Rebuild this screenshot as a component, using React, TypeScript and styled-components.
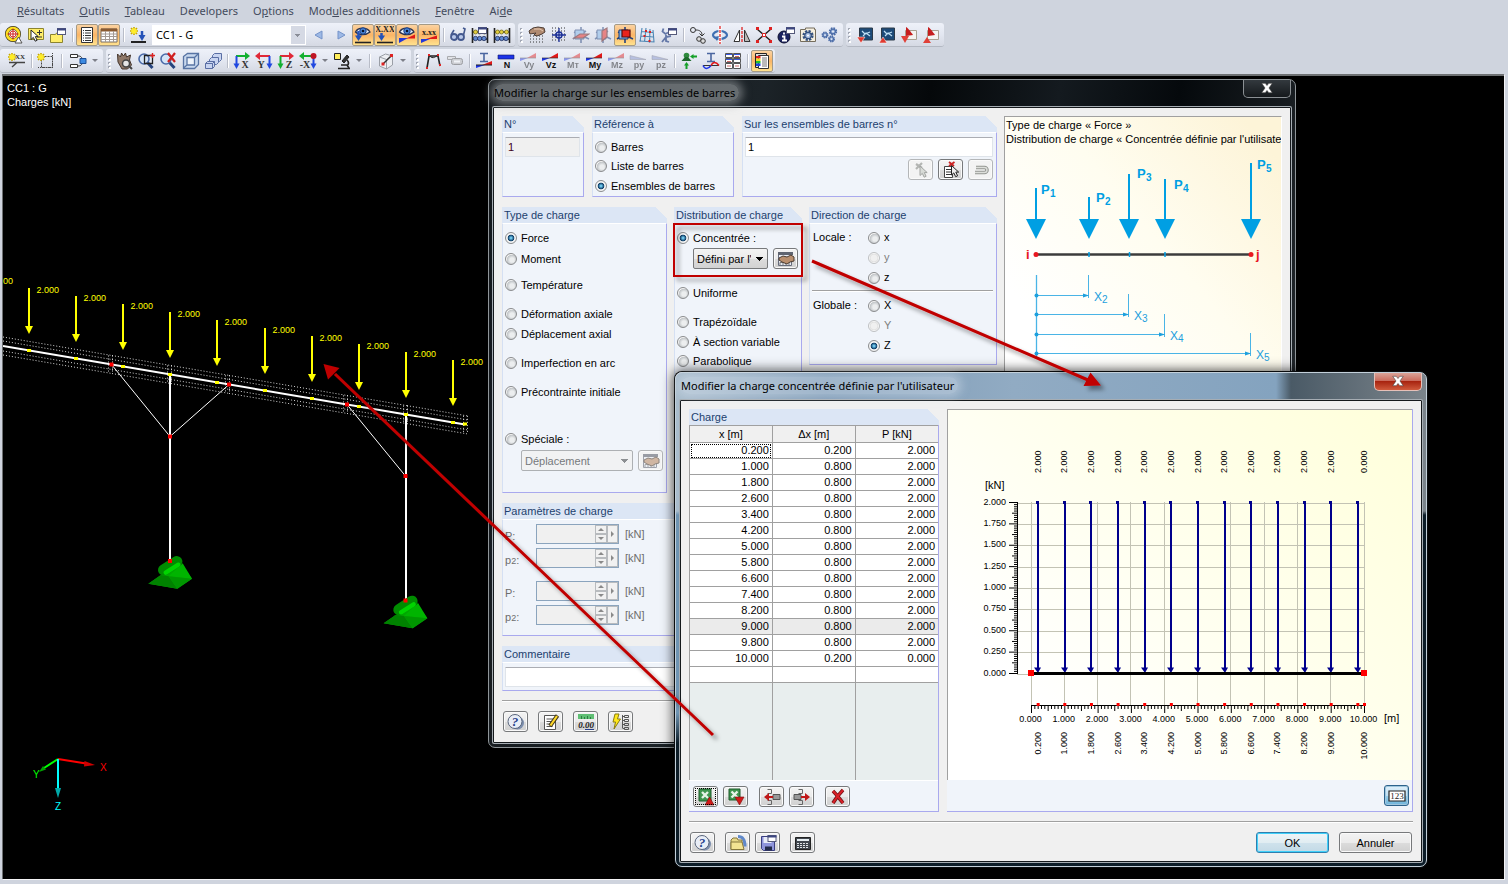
import React from "react";
import styled, { createGlobalStyle, css } from "styled-components";

const UI = `"Noto Sans", "Open Sans", sans-serif`;
const SANS = `"Liberation Sans", Arial, sans-serif`;

const GlobalStyle = createGlobalStyle`
  *, *::before, *::after { box-sizing: border-box; }
  body { margin: 0; background: #cfd4de; font-family: ${SANS}; font-size: 11px; color: #000; }
  button, input, select { font: inherit; color: inherit; margin: 0; }
`;

/* ---------- application frame ---------- */

const Page = styled.div`
  display: flex;
  flex-direction: column;
  min-height: 100vh;
  background: #cfd4de;
`;

const MenuBar = styled.nav`
  display: flex;
  align-items: center;
  gap: 15px;
  height: 22px;
  padding-left: 17px;
  font: 11px/20px ${UI};
  color: #444b5c;
`;

const MenuItem = styled.a`
  color: inherit;
  text-decoration: none;
  white-space: nowrap;
`;

const ToolRow = styled.div`
  display: flex;
  gap: 3px;
  height: 26px;
  padding: 1px 0;
`;

const ToolGroup = styled.div<{ $pad?: number }>`
  display: flex;
  align-items: center;
  padding: 0 2px 0 ${(p) => p.$pad ?? 0}px;
  border-radius: 3px;
  border-bottom: 1px solid #b3b8c2;
  background: linear-gradient(#eef1f9, #e3e7f1 50%, #d5d9e3);
`;

const Grip = styled.span`
  width: 8px;
  height: 16px;
  background: radial-gradient(circle at 3px 2px, #fff 1px, transparent 1px) 1px 1px / 8px 4px,
    radial-gradient(circle at 3px 2px, #a3a8b4 1px, transparent 1px) 0 0 / 8px 4px;
`;

const Separator = styled.span<{ $w?: number }>`
  width: ${(p) => p.$w ?? 7}px;
  height: 14px;
  display: flex;
  justify-content: center;
  &::before { content: ""; width: 2px; background: #b9bdc8; border-right: 1px solid #fff; }
`;

const ToolButton = styled.button<{ $on?: boolean }>`
  width: 22px;
  height: 22px;
  padding: 0;
  display: flex;
  align-items: center;
  justify-content: center;
  border: 1px solid transparent;
  border-radius: 2px;
  background: none;
  ${(p) =>
    p.$on &&
    css`
      border-color: #a59a86;
      background: linear-gradient(#fbd3a2, #fbb566 50%, #ffe28e);
    `}
`;

const DropArrow = styled.button`
  width: 12px;
  height: 22px;
  padding: 0;
  border: 0;
  background: none;
  display: flex;
  align-items: center;
  justify-content: center;
  &::before {
    content: "";
    border: 3px solid transparent;
    border-top-color: #7d7f88;
    border-bottom: 0;
  }
`;

const CaseSelect = styled.select`
  width: 154px;
  height: 20px;
  margin: 0 2px 0 3px;
  padding: 0 18px 0 3px;
  border: 1px solid #fff;
  border-radius: 0;
  appearance: none;
  font: 11px ${UI};
  background:
    linear-gradient(#8a8d97, #8a8d97) right 5px top 8px / 5px 1px no-repeat,
    linear-gradient(#8a8d97, #8a8d97) right 6px top 9px / 3px 1px no-repeat,
    linear-gradient(#8a8d97, #8a8d97) right 7px top 10px / 1px 1px no-repeat,
    linear-gradient(#d5d9e4, #d5d9e4) right / 14px 100% no-repeat,
    #fff;
`;

const Desktop = styled.main`
  flex: 1;
  position: relative;
  min-height: 800px;
  margin: 0 4px 5px 2px;
  border-top: 2px solid #6d7072;
  border-left: 1px solid #6d7072;
  background: #000;
  overflow: hidden;
  box-shadow: 1px 1px 0 #f4f4f6;
`;

const Layer = styled.svg`
  position: absolute;
  inset: 0;
  width: 100%;
  height: 100%;
  pointer-events: none;
`;

/* ---------- toolbar icons ---------- */

const IconSvg = styled.svg`
  flex: none;
`;

const Svg = ({ children }: { children: React.ReactNode }) => (
  <IconSvg width="18" height="18" viewBox="0 0 18 18" fill="none" aria-hidden="true">
    {children}
  </IconSvg>
);

const Star = ({ x, y }: { x: number; y: number }) => (
  <g transform={`translate(${x} ${y})`}>
    <path d="M0-4V4M-4 0H4M-3-3L3 3M3-3L-3 3" stroke="#c9a800" strokeWidth="1.6" />
    <path d="M0-3V3M-3 0H3M-2-2L2 2M2-2L-2 2" stroke="#ffee28" strokeWidth="1.4" />
  </g>
);

const Cursor = ({ x, y, c = "#fff", s = "#222" }: { x: number; y: number; c?: string; s?: string }) => (
  <path
    transform={`translate(${x} ${y})`}
    d="M0 0v9.5l2.3-2.1 1.9 3.8 1.9-.9-1.8-3.7H7.2z"
    fill={c}
    stroke={s}
    strokeWidth="1"
  />
);

const MiniWin = ({ x, y }: { x: number; y: number }) => (
  <g transform={`translate(${x} ${y})`}>
    <rect x=".5" y=".5" width="8" height="6" fill="#fff" stroke="#55597a" />
    <path d="M0 1.500h9" stroke="#3c4680" strokeWidth="2" />
  </g>
);

const Eye = ({ y = 6 }: { y?: number }) => (
  <g transform={`translate(0 ${y})`}>
    <path d="M1.500 1C4-4 13-4 16 1 12 4.500 5 4.500 1.500 1z" fill="#e7f0fc" stroke="#2a3350" strokeWidth="1.300" />
    <circle cx="9" cy="0" r="3.200" fill="#4a86d8" stroke="#1c3f86" />
    <circle cx="9" cy="0" r="1.300" fill="#07122c" />
  </g>
);

const Force = ({ t, dim, flat, full }: { t: string; dim?: boolean; flat?: boolean; full?: boolean }) => (
  <g opacity={dim ? 0.45 : 1}>
    {full ? (
      <path d="M1 3h16v4H1z" fill="#1c33e8" stroke="#111a66" strokeWidth=".6" />
    ) : flat ? (
      <path d="M1 3.500L17 7.500H1z" fill="#7f8dc8" stroke="#445" strokeWidth=".5" />
    ) : (
      <>
        <path d="M1 6h8L1 9z" fill="#1c33e8" />
        <path d="M8 6l9-5v5z" fill="#e01818" />
        <path d="M1 6h16" stroke="#333" strokeWidth=".7" />
      </>
    )}
    <text x="10" y="16" textAnchor="middle" fontSize="9" fontWeight="700" fontFamily="Liberation Sans" fill="#111">
      {t}
    </text>
  </g>
);

const Axis = ({ t, h, v, left }: { t: string; h: string; v: string; left?: boolean }) => (
  <>
    {left ? (
      <>
        <path d="M3 4h12" stroke={h} strokeWidth="2" />
        <path d="M5 0v8L0 4z" fill={h} />
        <path d="M14.500 4v9" stroke={v} strokeWidth="2" />
        <path d="M11.500 11.500h6L14.500 17z" fill={v} />
      </>
    ) : (
      <>
        <path d="M3 4h11" stroke={h} strokeWidth="2" />
        <path d="M12 0v8l5-4z" fill={h} />
        <path d="M3.500 4v9" stroke={v} strokeWidth="2" />
        <path d="M.5 11.500h6L3.500 17z" fill={v} />
      </>
    )}
    <text
      x={left ? 6 : 12}
      y="16"
      textAnchor="middle"
      fontSize="10"
      fontWeight="700"
      fontFamily="Liberation Serif"
      fill="#333"
    >
      {t}
    </text>
  </>
);

const Dots = ({ y0 = 2 }: { y0?: number }) => (
  <path
    d={[0, 1, 2, 3, 4].map((i) => `M2 ${y0 + i * 3}h15`).join("")}
    stroke="#333"
    strokeWidth="1"
    strokeDasharray="1 2"
  />
);

const Hand = () => (
  <>
    <path d="M1 5l4-3 5-1 6 1 1 4-3 2-5 2-3-1 2-2-6 1z" fill="#b08a70" stroke="#4c3c34" strokeWidth="1" />
    <path d="M6 3l6 0 3 2" stroke="#e8cbb4" />
  </>
);

const Plane = ({ red, dim }: { red: string; dim?: boolean }) => (
  <g opacity={dim ? 0.5 : 1}>
    <path d="M1 13L14 5M9 1v16M2 6l15 7" stroke="#26447e" strokeWidth="1.600" />
    <path d="M3 4h9v9H3z" fill="#7fb5e8" stroke="#1d3b77" />
    <path d={red} fill="#e8231c" stroke="#5a0d0d" strokeWidth="1.200" />
  </g>
);

const Abacus = () => (
  <>
    <path d="M1.500 2v15M16.500 2v15M1 6h16M1 13h16" stroke="#222" strokeWidth="1.600" />
    <g stroke="#6a6014" strokeWidth=".7" fill="#e2cf3e">
      <circle cx="4.500" cy="6" r="2" />
      <circle cx="8.500" cy="6" r="2" />
      <circle cx="13.500" cy="6" r="2" />
    </g>
    <g stroke="#16244f" strokeWidth=".7" fill="#5f86cf">
      <circle cx="4.500" cy="12.500" r="2.200" />
      <circle cx="8.700" cy="12.500" r="2.200" />
      <circle cx="13" cy="12.500" r="2.200" />
    </g>
  </>
);

const Lens = ({ x = 8, y = 7 }: { x?: number; y?: number }) => (
  <>
    <path d={`M${x + 3} ${y + 3}l5.500 6`} stroke="#26447e" strokeWidth="3" />
    <circle cx={x} cy={y} r="5" fill="#d4e4f7" stroke="#4a6aa8" strokeWidth="1.600" />
  </>
);

const Gear = ({ x, y, r, c = "#4b6ca8" }: { x: number; y: number; r: number; c?: string }) => (
  <>
    <circle cx={x} cy={y} r={r} stroke={c} strokeWidth={r * 0.8} strokeDasharray={`${r * 0.5} ${r * 0.285}`} />
    <circle cx={x} cy={y} r={r * 0.8} fill="#a8bddf" stroke={c} strokeWidth="1.200" />
    <circle cx={x} cy={y} r={r * 0.25} fill="#fff" />
  </>
);

const ICONS: Record<string, React.ReactNode> = {
  target: (
    <>
      <circle cx="8" cy="8" r="6" fill="#fff" stroke="#3a3416" strokeWidth="4" />
      <circle cx="8" cy="8" r="6" stroke="#ffe022" strokeWidth="2.600" />
      <circle cx="8" cy="8" r="3" stroke="#d33" />
      <path d="M8 2.500v11M2.500 8h11" stroke="#c22" />
      <path d="M10 17h7l-3.500-6z" fill="#fff" stroke="#555" />
    </>
  ),
  note: (
    <>
      <path d="M1.500 2.500h15v11h-15z" fill="#ffee6a" stroke="#8c8430" />
      <Cursor x={4} y={4} />
      <path d="M10 6.500h5M12.500 4v5M10 11h5" stroke="#333" />
    </>
  ),
  folderwin: (
    <>
      <path d="M1.500 8.500h5l1-1.500h6v9.500h-12z" fill="#ffee6a" stroke="#8c8430" />
      <MiniWin x={8} y={2} />
    </>
  ),
  list: (
    <>
      <path d="M3.500 1.500h11v15h-11z" fill="#fff" stroke="#333" />
      <path d="M5 4.500h8M5 7h8M5 9.500h8M5 12h8M5 14.500h8" stroke="#333" />
      <path d="M6.500 3.500v12" stroke="#fff" />
    </>
  ),
  table: (
    <>
      <path d="M1 3h16v13H1z" fill="#fff" stroke="#77706a" />
      <path d="M1 4h16" stroke="#8a5a30" strokeWidth="3" />
      <path d="M1 8h16M1 10.500h16M1 13.500h16M5.500 5v11M9.500 5v11M13.500 5v11" stroke="#a39a94" />
    </>
  ),
  addload: (
    <>
      <Star x={5} y={5} />
      <path d="M2 16h15" stroke="#222" strokeWidth="2" />
      <path d="M13 5v5" stroke="#2452b8" strokeWidth="2.500" />
      <path d="M9.500 9h7L13 15z" fill="#2452b8" />
    </>
  ),
  prev: <path d="M12 5v8L5 9z" fill="#9db9e6" stroke="#7493c9" />,
  next: <path d="M6 5v8l7-4z" fill="#9db9e6" stroke="#7493c9" />,
  eyeload: (
    <>
      <Eye y={5} />
      <path d="M1 16.500h16" stroke="#222" strokeWidth="1.600" />
      <path d="M4.500 5v6" stroke="#2452b8" strokeWidth="2.500" />
      <path d="M1 9.500h7L4.500 15z" fill="#2452b8" />
    </>
  ),
  xload: (
    <>
      <text x="9" y="6" textAnchor="middle" fontSize="8" fontWeight="700" fontFamily="Liberation Serif" fill="#222">X.XX</text>
      <path d="M1 16.500h16" stroke="#222" strokeWidth="1.600" />
      <path d="M5.500 7v4" stroke="#2452b8" strokeWidth="2.500" />
      <path d="M2 9.500h7L5.500 15z" fill="#2452b8" />
    </>
  ),
  eyeres: (
    <>
      <Eye y={5} />
      <path d="M1 17v-5l9 0z" fill="#2338d8" />
      <path d="M8 12.500l9-4v4z" fill="#e01818" />
    </>
  ),
  xres: (
    <>
      <text x="9" y="9" textAnchor="middle" fontSize="8" fontWeight="700" fontFamily="Liberation Serif" fill="#222">x.xx</text>
      <path d="M1 17v-4h9z" fill="#2338d8" />
      <path d="M6 13l11-3.500v3.500z" fill="#e01818" />
    </>
  ),
  glasses: (
    <>
      <circle cx="5" cy="11" r="3" fill="#b8c8ea" stroke="#44598f" strokeWidth="1.800" />
      <circle cx="12" cy="11" r="3" fill="#b8c8ea" stroke="#44598f" strokeWidth="1.800" />
      <path d="M8 10.500l1-1M2 9l3-5M14.500 9L16 3l-2-1" stroke="#44598f" strokeWidth="1.600" />
    </>
  ),
  abacuswin: (
    <>
      <Abacus />
      <MiniWin x={7} y={1} />
    </>
  ),
  abacus: <Abacus />,
  handgrid: (
    <>
      <Dots y0={4} />
      <Hand />
    </>
  ),
  snap: (
    <>
      <Dots />
      <circle cx="9" cy="9" r="3" fill="#dfe8fa" stroke="#1b2f96" strokeWidth="1.400" />
      <path d="M9 2v14M2 9h14" stroke="#1b2f96" strokeWidth="1.300" />
    </>
  ),
  plane1: <Plane red="M2 12l6-4h9l-6 4z" dim />,
  plane2: <Plane red="M8 5l5-3v9l-5 4z" dim />,
  plane3: <Plane red="M6 4h8v7H6z" />,
  mesh: (
    <>
      <path d="M4 2L2 16M8 2L6.500 16M12 3l-.5 14M3 5.500l12 1M2.500 10l13 1M1.500 15l15 1M15 4l1 12" stroke="#4c86b4" strokeWidth="1.100" />
      <path d="M7 4h2v2H7zM11 5h2v2h-2zM5.500 9h2v2h-2zM10.500 14h2v2h-2z" fill="#d22" />
    </>
  ),
  wrenchwin: (
    <>
      <path d="M2 16l4-5 5-1M3.500 2.500L2.500 5.500l3 2.500 2.500-1.500M6 9v6l3 1" stroke="#6478a8" strokeWidth="1.800" />
      <MiniWin x={8} y={2} />
    </>
  ),
  movecopy: (
    <>
      <circle cx="4" cy="4" r="2.500" stroke="#333" />
      <path d="M7 4c4 0 6 2 6 5M10.500 7.500L13 10l2.500-2.500" stroke="#333" />
      <circle cx="10" cy="13" r="2.300" fill="#ddd" stroke="#333" />
      <circle cx="14" cy="15" r="2.300" fill="#ddd" stroke="#333" />
    </>
  ),
  rotate: (
    <>
      <ellipse cx="9" cy="9" rx="7" ry="4" stroke="#3f6fb2" strokeWidth="2.200" />
      <path d="M9 0v18" stroke="#fff" strokeWidth="3" />
      <path d="M9 0v18" stroke="#d22" strokeWidth="1.300" strokeDasharray="3 1" />
      <path d="M3 11l5-1-2 5z" fill="#3f6fb2" />
    </>
  ),
  mirror: (
    <>
      <path d="M1 15.500L6.500 4v11.500z" fill="#fff" stroke="#333" />
      <path d="M17 15.500L11.500 4v11.500z" fill="#bbb" stroke="#333" />
      <path d="M9 1v16" stroke="#d22" strokeWidth="1.300" strokeDasharray="3 1" />
    </>
  ),
  split: (
    <>
      <path d="M2 3l14 12M16 3L2 15" stroke="#222" strokeWidth="1.400" />
      <path d="M1 1h3v3H1zM14 1h3v3h-3zM1 14h3v3H1zM14 14h3v3h-3z" fill="#d22" />
      <path d="M7.500 7.500h3v3h-3z" fill="#fff" stroke="#d22" />
    </>
  ),
  info: (
    <>
      <circle cx="7" cy="11" r="6" fill="#1b2360" stroke="#0c1030" />
      <path d="M7 6.500v2M5 10.500h2.500v4M5 14.500h5" stroke="#fff" strokeWidth="1.800" />
      <MiniWin x={9} y={1} />
    </>
  ),
  cfg: (
    <>
      <path d="M1.500 3.500h5V2h9v1.500h1v12h-15z" fill="#f5efe0" stroke="#746c5c" />
      <Gear x={9} y={9.5} r={4} c="#33507f" />
    </>
  ),
  gears: (
    <>
      <Gear x={4} y={9} r={2.5} />
      <Gear x={12} y={5.5} r={3} />
      <Gear x={10.5} y={13} r={2.5} />
    </>
  ),
  rot1: (
    <>
      <path d="M3.500 2h13v12h-13z" fill="#1c4a78" stroke="#2c3a48" />
      <path d="M6 5l3 3 5-2M7 10l3-3 4 3" stroke="#bfe0f5" strokeWidth="1.200" />
      <path d="M1 11h8l-4 6z" fill="#e03a30" stroke="#fff" strokeWidth=".5" />
    </>
  ),
  rot2: (
    <>
      <path d="M3.500 2h13v12h-13z" fill="#1c4a78" stroke="#2c3a48" />
      <path d="M6 5l3 3 5-2M7 10l3-3 4 3" stroke="#bfe0f5" strokeWidth="1.200" />
      <path d="M1 17h8l-4-6z" fill="#e03a30" stroke="#fff" strokeWidth=".5" />
    </>
  ),
  pdf1: (
    <>
      <path d="M5.500 4.500h11v9h-11z" fill="#f3f3f0" stroke="#a8a090" />
      <path d="M6 1c2 1 5 5 7 8l-7 1z" fill="#c51d1d" />
      <path d="M1 10h8l-4 7z" fill="#e04038" />
    </>
  ),
  pdf2: (
    <>
      <path d="M5.500 4.500h11v9h-11z" fill="#f3f3f0" stroke="#a8a090" />
      <path d="M6 1c2 1 5 5 7 8l-7 1z" fill="#c51d1d" />
      <path d="M1 17h8l-4-6z" fill="#e04038" />
    </>
  ),
  starxx: (
    <>
      <Star x={4} y={5} />
      <text x="12" y="7" textAnchor="middle" fontSize="7" fontWeight="700" fontFamily="Liberation Serif" fill="#333">XX</text>
      <path d="M1 10.500h16M4 15l5-4.500" stroke="#444" strokeWidth="1.400" />
    </>
  ),
  starsel: (
    <>
      <path d="M4.500 4.500h11v11h-11z" stroke="#444" strokeDasharray="2 1" />
      <path d="M15.500 1v16M1 15.500h16" stroke="#444" strokeDasharray="1 1" />
      <Star x={4} y={5} />
    </>
  ),
  flow: (
    <>
      <path d="M1.500 2.500h7v3h-7zM1.500 12.500h7v3h-7z" fill="#fff" stroke="#333" />
      <path d="M9 4c4 0 4 2 4 5M9 14c4 0 4-2 4-5" stroke="#333" />
      <path d="M11 6.500h6v5h-6z" fill="#3d8ae0" stroke="#1d4f96" />
    </>
  ),
  handlens: (
    <>
      <path d="M1.500 2l3 3 1-4 2 3 2-3 1 4 4-2-1 5 2 5-4 4H6L2 10z" fill="#8f7868" stroke="#44352c" />
      <circle cx="10" cy="11.500" r="3.500" fill="#e6e6e6" stroke="#444" strokeWidth="1.500" />
      <path d="M13 14l3 3" stroke="#444" strokeWidth="2" />
    </>
  ),
  zoomwin: (
    <>
      <Lens x={6} y={7} />
      <path d="M6.500 3.500h8v8h-8z" stroke="#222" strokeWidth="1.300" />
      <path d="M14.500 1v5M12 3.500h5" stroke="#d22" strokeWidth="1.400" />
    </>
  ),
  zoomx: (
    <>
      <Lens x={6} y={7} />
      <path d="M8 1l7 9M15 1L8 10" stroke="#d02020" strokeWidth="2.200" />
    </>
  ),
  cube: (
    <>
      <path d="M1.500 4.500l4-3h11v11l-4 4h-11z" fill="#c8d8ee" stroke="#5874a4" strokeWidth="1.300" />
      <path d="M5 5.500h7.500v7.500H5zM12.500 5.500l4-4M5 13l-3.500 3" stroke="#5874a4" strokeWidth="1.300" fill="#eef3fa" />
    </>
  ),
  cubes: (
    <g fill="#c8d4f0" stroke="#5a6ea4">
      <path d="M8.500 3.500l2-2h7v6l-2 2h-7z" />
      <path d="M5.500 7.500l2-2h7v5l-2 2h-7z" />
      <path d="M1.500 11.500l2-2h7v5l-2 2h-7zM1.500 11.500h7v5M8.500 11.500l2-2" />
    </g>
  ),
  axX: <Axis t="X" h="#12b030" v="#2048e0" />,
  axY: <Axis t="Y" h="#e02838" v="#2048e0" left />,
  axZ: <Axis t="Z" h="#e02838" v="#12b030" />,
  axNX: (
    <>
      <path d="M3 4h12" stroke="#12b030" strokeWidth="2" />
      <path d="M5 0v8L0 4z" fill="#12b030" />
      <path d="M14.500 4v9" stroke="#2048e0" strokeWidth="2" />
      <path d="M11.500 11.500h6L14.500 17z" fill="#2048e0" />
      <circle cx="14.500" cy="4" r="3" fill="#c01525" />
      <text x="6" y="16" textAnchor="middle" fontSize="10" fontWeight="700" fontFamily="Liberation Serif" fill="#333">-X</text>
    </>
  ),
  micro: (
    <>
      <path d="M1.500 1.500h6v6h-6z" fill="#ffee5a" stroke="#222" />
      <path d="M9 9l5-6 2 2-5 6z" fill="#333" stroke="#222" />
      <path d="M5 16.500h12M8 13h6l2 3M14 8c2 2 2 4 0 6" stroke="#222" strokeWidth="1.600" />
    </>
  ),
  clip: (
    <>
      <path d="M2.500 5l6-3 7 2v9l-6 4-7-3zM2.500 5l7 2.500V17M9.500 7.500l6-3.500" stroke="#9a9ea6" fill="#eceef2" />
      <path d="M6 12l8-8" stroke="#333" strokeWidth="1.500" />
      <path d="M4.500 10.500h3v3h-3zM13 2h3v3h-3z" fill="#d22" />
    </>
  ),
  frame: (
    <>
      <path d="M3 16L5 4l9 0 2 10" stroke="#222" strokeWidth="1.600" />
      <path d="M5 3C9 9 13 3 14 3" stroke="#222" />
      <path d="M4 2h2v2H4zM13 2h2v2h-2zM2 15h2v2H2zM15 12h2v2h-2z" fill="#d22" />
    </>
  ),
  render: (
    <g opacity=".55">
      <path d="M1.500 4.500h8v3h-8z" fill="#ddd" stroke="#777" />
      <rect x="5.500" y="6.500" width="11" height="6" rx="2" fill="#bbb" stroke="#666" />
      <path d="M8 9.500h6" stroke="#fff" strokeWidth="2" />
    </g>
  ),
  ibeam: (
    <>
      <path d="M5 1.500h8M9 2v7M5 9.500h8" stroke="#4a66a0" strokeWidth="1.600" />
      <path d="M1 13h9L1 16z" fill="#1c33e8" />
      <path d="M7 13l10-4v4z" fill="#e01818" />
      <path d="M1 13h16" stroke="#222" />
    </>
  ),
  fN: <Force t="N" full />,
  fVy: <Force t="Vy" dim />,
  fVz: <Force t="Vz" />,
  fMt: <Force t="Mᴛ" dim />,
  fMy: <Force t="My" />,
  fMz: <Force t="Mz" dim />,
  fpy: <Force t="py" dim flat />,
  fpz: <Force t="pz" dim flat />,
  support: (
    <>
      <circle cx="6.500" cy="3.500" r="2.800" fill="#2f8a3e" />
      <path d="M5 5h3l3.500 4h-10z" fill="#1e6a2c" />
      <path d="M6.500 17v-5M17 4.500h-5" stroke="#14a028" strokeWidth="2" />
      <path d="M4 13.500h5L6.500 10zM13.500 2v5L10 4.500z" fill="#14a028" />
    </>
  ),
  deform: (
    <>
      <path d="M5 1.500h8M9 2v7M5 9.500h8" stroke="#4a66a0" strokeWidth="1.600" />
      <path d="M1 13.500h16" stroke="#333" />
      <path d="M1 13.500c2 4 5 4 8 0" stroke="#1c33e8" strokeWidth="1.500" />
      <path d="M9 13.500c2-4 5-4 8 0" stroke="#e01818" strokeWidth="1.500" />
    </>
  ),
  panels: (
    <>
      <path d="M1.500 1.500h7v4h-7zM9.500 1.500h7v4h-7zM1.500 6.500h7v4h-7zM9.500 6.500h7v4h-7zM1.500 11.500h7v5h-7zM9.500 11.500h7v5h-7z" fill="#fff" stroke="#555" />
      <path d="M2 2.500h6M10 2.500h6M2 7.500h6M10 7.500h6" stroke="#3a58e0" />
      <path d="M3 9.500h4M11 4.500h4M3 14h4M11 14h4" stroke="#c66" />
    </>
  ),
  palette: (
    <>
      <path d="M2.500 1.500h11v14h-11z" fill="#ddd" stroke="#222" />
      <path d="M5.500 3.500h10v13h-10z" fill="#fff" stroke="#333" />
      <path d="M3 4h4.500v2.500H3z" fill="#e02020" />
      <path d="M3 6.500h4.500V9H3z" fill="#f0e020" />
      <path d="M3 9h4.500v2.500H3z" fill="#20c030" />
      <path d="M3 11.500h4.500V14H3z" fill="#2040e0" />
      <path d="M9 6h5M9 8h5M9 10h5M9 12h5M9 14h5" stroke="#777" />
    </>
  ),
  pick: (
    <>
      <path d="M4 3l6 4M10 2L4 8" stroke="#8a8c88" strokeWidth="2.200" />
      <Cursor x={8} y={5} c="#c9cdc6" s="#6c706a" />
    </>
  ),
  picklist: (
    <>
      <path d="M2.500 5.500h8v11h-8z" fill="#fff" stroke="#444" />
      <path d="M4 8.500h5M4 11h5M4 13.500h5" stroke="#333" />
      <path d="M7 1l5 4M12.500 1L7 5" stroke="#c22" strokeWidth="1.800" />
      <Cursor x={9.5} y={4.5} c="#eee" s="#222" />
    </>
  ),
  undo: (
    <>
      <path d="M4 6.500h8.500a2.500 2.500 0 0 1 0 5H3" stroke="#555952" strokeWidth="3.600" />
      <path d="M4 6.500h8.500a2.500 2.500 0 0 1 0 5H3" stroke="#cfd3cc" strokeWidth="1.400" />
    </>
  ),
  handwin: (
    <>
      <path d="M1.500 2.500h13v13h-13z" fill="#e9edf5" stroke="#666c7c" />
      <path d="M1 3.500h15" stroke="#5f6470" strokeWidth="3" />
      <path d="M3 15.500v-3h3v3M9 15v-3h3v3" stroke="#777" />
      <path d="M2 8l4-2 4 1 4-2 3 2v4l-4 1-3 2-5-2-3-2z" fill="#b98f6e" stroke="#4c3c30" />
    </>
  ),
  help: (
    <>
      <ellipse cx="10.500" cy="10" rx="6.500" ry="6.500" fill="#7d8fae" />
      <circle cx="8" cy="8.500" r="7" fill="#e8edf6" stroke="#59657c" />
      <text x="8" y="13" textAnchor="middle" fontSize="13" fontWeight="700" fontStyle="italic" fontFamily="Liberation Serif" fill="#26408a">?</text>
    </>
  ),
  edit: (
    <>
      <path d="M2.500 2.500h11v14h-11z" fill="#fff" stroke="#555" />
      <path d="M4.500 6h7M4.500 8.500h5M4.500 11h4M4.500 13.500h6" stroke="#555" />
      <path d="M8 13L15.500 2.500" stroke="#40361a" strokeWidth="4" />
      <path d="M8.500 12.500L15 3" stroke="#ffd92a" strokeWidth="2.200" />
    </>
  ),
  units: (
    <>
      <path d="M1 1h16v5H1z" fill="#5fbf74" />
      <path d="M4.500 3v3M7.500 4v2M10.500 3v3M13.500 4v2" stroke="#2c7c40" />
      <text x="9" y="15" textAnchor="middle" fontSize="9" fontWeight="700" fontStyle="italic" fontFamily="Liberation Serif" fill="#222">0.00</text>
      <path d="M8 16.500h9" stroke="#26408a" />
    </>
  ),
  bolt: (
    <>
      <path d="M3 1h4L5.500 6h3L2 16l1.500-7H1z" fill="#ffe81a" stroke="#8a7c10" />
      <path d="M10.500 2v13M10.500 3.500H12M10.500 7.500H12M10.500 11.500H12M10.500 15.500H12M12.500 2.500h4v2h-4zM12.500 6.500h4v2h-4zM12.500 10.500h4v2h-4zM12.500 14.500h4v2h-4z" stroke="#555" />
    </>
  ),
  xlUp: (
    <>
      <path d="M2 1h12v12H2z" fill="#3f9650" stroke="#1f5a2c" />
      <path d="M5 4l6 6M11 4l-6 6" stroke="#e6f4e8" strokeWidth="2.400" />
      <path d="M8 17h9l-4.500-8z" fill="#d01a1a" stroke="#7a0c0c" strokeWidth=".6" />
    </>
  ),
  xlDown: (
    <>
      <path d="M2 1h11v11H2z" fill="#3f9650" stroke="#1f5a2c" />
      <path d="M4.500 3.500l6 6M10.500 3.500l-6 6" stroke="#e6f4e8" strokeWidth="2.400" />
      <path d="M8 9h9l-4.500 8z" fill="#d01a1a" stroke="#7a0c0c" strokeWidth=".6" />
    </>
  ),
  rowIn: (
    <>
      <path d="M4.500 1.500h4v4h-4M4.500 12.500h4v4h-4" stroke="#666" />
      <path d="M10 6.500h7v5h-7z" fill="#999" stroke="#555" />
      <path d="M4 9h6" stroke="#c01818" strokeWidth="2" />
      <path d="M6 5v8L1 9z" fill="#c01818" />
    </>
  ),
  rowOut: (
    <>
      <path d="M5.500 1.500h4v4h-4M5.500 12.500h4v4h-4" stroke="#666" />
      <path d="M1 6.500h7v5H1z" fill="#999" stroke="#555" />
      <path d="M8 9h6" stroke="#c01818" strokeWidth="2" />
      <path d="M12 5v8l5-4z" fill="#c01818" />
    </>
  ),
  del: (
    <>
      <path d="M4 3c4 4 6 7 10 12M14 2C10 6 7 10 4 15" stroke="#6a1014" strokeWidth="3.600" />
      <path d="M4 3c4 4 6 7 10 12M14 2C10 6 7 10 4 15" stroke="#d82028" strokeWidth="2.200" />
    </>
  ),
  open: (
    <>
      <path d="M9 2.500c5 0 7 3 7 10" stroke="#6088c8" strokeWidth="3" />
      <path d="M2 15.500V6l2-2h4l1 2h4v3" fill="#e8d888" stroke="#85763a" />
      <path d="M2 15.500V8h11l2 7.500z" fill="#f3e392" stroke="#85763a" />
    </>
  ),
  save: (
    <>
      <path d="M2.500 2.500h13v14h-11l-2-2z" fill="#8f95dc" stroke="#3a3f80" />
      <path d="M6 12.500h7v4H6z" fill="#222a48" />
      <path d="M4.500 3h8v6h-8z" fill="#e8ecf8" />
      <MiniWin x={8.5} y={1} />
    </>
  ),
  calc: (
    <>
      <path d="M1.500 3.500h15v12h-15z" fill="#40464e" stroke="#222" />
      <path d="M3 6h12" stroke="#e6eef2" strokeWidth="2" />
      <path d="M3 9.500h12M3 11.500h12M3 13.500h12" stroke="#dfe3e6" strokeDasharray="2 1" />
    </>
  ),
  nums: (
    <>
      <path d="M1 4h16v10H1z" fill="#fff" stroke="#222" strokeWidth="1.200" />
      <text x="9" y="12" textAnchor="middle" fontSize="9" fontFamily="Liberation Serif" fill="#222">123</text>
    </>
  ),
};

const Tool = ({ i, on }: { i: string; on?: boolean }) => (
  <ToolButton type="button" $on={on} aria-label={i}>
    <Svg>{ICONS[i]}</Svg>
  </ToolButton>
);
const Tools = ({ list }: { list: string[] }) => (
  <>
    {list.map((i) => (
      <Tool key={i} i={i} />
    ))}
  </>
);

const Toolbars = () => (
  <header>
    <MenuBar>
      <MenuItem href="#"><u>R</u>ésultats</MenuItem>
      <MenuItem href="#"><u>O</u>utils</MenuItem>
      <MenuItem href="#"><u>T</u>ableau</MenuItem>
      <MenuItem href="#">Developers</MenuItem>
      <MenuItem href="#">O<u>p</u>tions</MenuItem>
      <MenuItem href="#">Mod<u>u</u>les additionnels</MenuItem>
      <MenuItem href="#"><u>F</u>enêtre</MenuItem>
      <MenuItem href="#">Ai<u>d</u>e</MenuItem>
    </MenuBar>
    <ToolRow>
      <ToolGroup $pad={3}>
        <Tools list={["target", "note", "folderwin"]} />
        <Separator />
        <Tool i="list" on />
        <Tool i="table" on />
        <Separator />
        <Tool i="addload" />
        <CaseSelect aria-label="Cas de charge">
          <option>CC1 - G</option>
        </CaseSelect>
        <Tools list={["prev", "next"]} />
        <Tool i="eyeload" on />
        <Tool i="xload" on />
        <Tool i="eyeres" on />
        <Tool i="xres" on />
        <Separator />
        <Tools list={["glasses", "abacuswin", "abacus"]} />
      </ToolGroup>
      <ToolGroup>
        <Grip />
        <Tools list={["handgrid", "snap", "plane1", "plane2"]} />
        <Tool i="plane3" on />
        <Tools list={["mesh", "wrenchwin"]} />
        <Separator />
        <Tools list={["movecopy", "rotate", "mirror", "split", "info", "cfg", "gears"]} />
      </ToolGroup>
      <ToolGroup>
        <Grip />
        <Tools list={["rot1", "rot2", "pdf1", "pdf2"]} />
      </ToolGroup>
    </ToolRow>
    <ToolRow>
      <ToolGroup $pad={6}>
        <Tool i="starxx" />
        <Separator />
        <Tool i="starsel" />
        <Separator $w={10} />
        <Tool i="flow" />
        <DropArrow type="button" aria-label="Plus" />
      </ToolGroup>
      <ToolGroup>
        <Grip />
        <Tools list={["handlens", "zoomwin", "zoomx", "cube", "cubes"]} />
        <Separator />
        <Tools list={["axX", "axY", "axZ", "axNX"]} />
        <DropArrow type="button" aria-label="Vues" />
        <Tool i="micro" />
        <DropArrow type="button" aria-label="Visibilité" />
        <Separator $w={10} />
        <Tool i="clip" />
        <DropArrow type="button" aria-label="Plans" />
      </ToolGroup>
      <ToolGroup>
        <Grip />
        <Tools list={["frame", "render"]} />
        <Separator />
        <Tools list={["ibeam", "fN", "fVy", "fVz", "fMt", "fMy", "fMz", "fpy", "fpz"]} />
        <Separator />
        <Tools list={["support", "deform", "panels"]} />
        <Separator />
        <Tool i="palette" on />
      </ToolGroup>
    </ToolRow>
  </header>
);

/* ---------- 3D model ---------- */

const beamY = (x: number) => 346 + ((x - 3) * 78.5) / 462;

const SupportBlock = () => (
  <g strokeLinecap="round">
    <path d="M445 1031l35-24 66-31 30 40-44 30z" fill="#00a800" />
    <path d="M445 1031l37-26 24 4 26 37z" fill="#008200" />
    <path d="M506 1009l42-39 28 46z" fill="#00b400" />
    <path d="M506 1009l70 7-44 30z" fill="#009600" />
    <path d="M491 990l39-25" stroke="#008c00" strokeWidth="34" />
    <path d="M497 998l38-24" stroke="#00d400" strokeWidth="13" />
  </g>
);

const segs = [3, 112, 171, 229, 347, 407, 467];

const Model = () => (
  <Layer aria-label="Modèle">
    <g transform="translate(-3 -76)" fontFamily="Liberation Sans">
      <g fill="#fff" fontSize="11">
        <text x="7" y="92">CC1 : G</text>
        <text x="7" y="106">Charges [kN]</text>
      </g>
      <g stroke="#d8d8d8" strokeWidth="1" strokeDasharray="1 2" fill="none">
        {segs.slice(1).map((x, k) => {
          const a = segs[k];
          return (
            <React.Fragment key={x}>
              {[-9, -5, 5, 9].map((o) => (
                <path key={o} d={`M${a} ${beamY(a) + o}L${x} ${beamY(x) + o}`} />
              ))}
              <path d={`M${x + 0.5} ${beamY(x) - 9}v18M${x - 3.5} ${beamY(x) - 9}v18`} />
            </React.Fragment>
          );
        })}
      </g>
      <g stroke="#fff" fill="none">
        <path d="M3 346L465 424.500" strokeWidth="2" />
        <path d="M170 374v187M406 414v187" strokeWidth="2" />
        <path d="M111.500 364.500L170 436.500 229 384.500M347 404.500l58.500 71.500" strokeWidth="1" />
      </g>
      {Array.from({ length: 10 }, (_, i) => {
        const x = Math.round(29 + i * 47.1);
        const y = 288 + i * 8;
        return (
          <g key={i} fill="#ff0">
            <path d={`M${x - 1} ${y}h2v38h3l-4 8-4-8h3z`} />
            <rect x={x - 2} y={y + 61} width="4" height="3" />
            <text x={x + 7.5} y={y + 4.5} fontSize="9">2.000</text>
          </g>
        );
      })}
      <text x="3" y="284" fontSize="9" fill="#ff0">00</text>
      <rect x="463" y="422.500" width="4" height="3" fill="#ff0" />
      <g transform="translate(0 240) scale(.33333)">
        <SupportBlock />
        <g transform="translate(706 119)"><SupportBlock /></g>
      </g>
      <g fill="#f00">
        {[[111.5, 364.5], [229, 384.5], [347, 404.5], [170, 436.5], [405.5, 476], [170, 561], [405.5, 600.5]].map(([x, y]) => (
          <rect key={`${x}-${y}`} x={x - 2} y={y - 2} width="4" height="4" />
        ))}
      </g>
      <g strokeWidth="2" fontSize="10">
        <path d="M58 759L86 763.500" stroke="#f00" />
        <path d="M84.500 761l10.500 4-11 1.500z" fill="#d00000" />
        <path d="M58 759L44 768" stroke="#0f0" />
        <path d="M43 766l3 3.500-7 2.500z" fill="#00a000" />
        <path d="M58 759v30" stroke="#0ff" />
        <path d="M55 788h6l-3 10z" fill="#0aa" />
        <text x="100" y="771" fill="#f00">X</text>
        <text x="33" y="778" fill="#0f0">Y</text>
        <text x="55" y="810" fill="#0ff">Z</text>
      </g>
    </g>
  </Layer>
);

/* ---------- dialog parts ---------- */

const WindowFrame = styled.section<{ $x: number; $y: number; $w: number; $active?: boolean }>`
  position: absolute;
  left: ${(p) => p.$x}px;
  top: ${(p) => p.$y}px;
  width: ${(p) => p.$w}px;
  padding: 0 4px 4px;
  border: 1px solid ${(p) => (p.$active ? "#c3d0da" : "#8f9599")};
  border-radius: 7px;
  ${(p) =>
    p.$active
      ? css`
          background:
            linear-gradient(180deg, transparent 138px, #6f94b2 142px, #6f94b2 340px, #0d1d28 370px) left / 50% 100% no-repeat,
            linear-gradient(180deg, transparent 138px, #0d1d28 142px) right / 50% 100% no-repeat,
            linear-gradient(90deg, #a9bccc, #7d9ab5 20%, #91abc3 45%, #84a3bf 80%, #4a5a66 82%, #7b848b 100%);
          box-shadow: 0 0 0 1px #0a0c0e, 0 0 12px 2px rgba(0, 0, 0, 0.7);
        `
      : css`
          background: linear-gradient(100deg, #14181c, #1c2328 30%, #05080a 48%, #141a1f 62%, #05090c 75%, #2b3136);
          box-shadow: 0 0 0 1px #000;
        `}
`;

const TitleBar = styled.header`
  display: flex;
  align-items: flex-start;
  justify-content: space-between;
  height: 27px;
  padding-left: 1px;
`;

const WindowTitle = styled.h2<{ $active?: boolean }>`
  margin: 4px 0 0;
  padding: 0 4px 0 0;
  font: 11px/17px ${UI};
  color: #000;
  border-radius: 9px;
  ${(p) =>
    p.$active
      ? css`
          background: rgba(225, 235, 245, 0.35);
          box-shadow: 0 0 8px 4px rgba(225, 235, 245, 0.35);
        `
      : css`
          background: rgba(150, 155, 158, 0.62);
          box-shadow: 0 0 8px 4px rgba(150, 155, 158, 0.62);
        `}
`;

const CloseButton = styled.button<{ $active?: boolean }>`
  width: 48px;
  height: 18px;
  padding: 0 0 2px;
  border: 1px solid ${(p) => (p.$active ? "#e6c0b8" : "#8b9094")};
  border-top: 0;
  border-radius: 0 0 5px 5px;
  background: ${(p) =>
    p.$active ? "linear-gradient(#d9a398, #c9695a 48%, #a82410 50%, #cf5a3c)" : "linear-gradient(#33393e, #15191c)"};
  display: flex;
  align-items: center;
  justify-content: center;
`;

const Client = styled.div`
  border: 1px solid #15191c;
  border-radius: 1px;
  background: #f0f0f0;
  box-shadow: 0 0 0 1px #a6adb3;
  padding: 8px;
`;

const Window = ({
  title, x, y, w, active, children,
}: { title: string; x: number; y: number; w: number; active?: boolean; children: React.ReactNode }) => (
  <WindowFrame $x={x} $y={y} $w={w} $active={active} aria-label={title}>
    <TitleBar>
      <WindowTitle $active={active}>{title}</WindowTitle>
      <CloseButton type="button" $active={active} aria-label="Fermer">
        <svg width="14" height="12" viewBox="0 0 12 10" aria-hidden="true">
          <path d="M1.500 1h3L6 2.900 7.500 1h3L7.700 5l2.800 4h-3L6 7.100 4.500 9h-3L4.300 5z" fill="#fff" stroke="#444" strokeWidth=".5" />
        </svg>
      </CloseButton>
    </TitleBar>
    <Client>{children}</Client>
  </WindowFrame>
);

const Group = styled.div<{ $w?: number; $h?: number }>`
  display: flex;
  flex-direction: column;
  flex: none;
  ${(p) => p.$w && `width: ${p.$w}px;`}
  ${(p) => p.$h && `min-height: ${p.$h}px;`}
`;

const GroupHead = styled.div`
  flex: none;
  height: 16px;
  padding-left: 2px;
  line-height: 17px;
  color: #1d3f6e;
  white-space: nowrap;
  background: linear-gradient(225deg, transparent 8px, #dce6f5 8px);
`;

const GroupBody = styled.div`
  flex: 1;
  display: flex;
  flex-direction: column;
  padding: 4px 3px 0 2px;
  border: 1px solid #a9a9ee;
  border-top-color: #fff;
  border-left-color: #d5e0f3;
  background: #f0f4fa;
`;

const Box = ({ title, w, h, children }: { title: string; w?: number; h?: number; children: React.ReactNode }) => (
  <Group role="group" $w={w} $h={h} aria-label={title}>
    <GroupHead>{title}</GroupHead>
    <GroupBody>{children}</GroupBody>
  </Group>
);

const Row = styled.div<{ $gap?: number; $mt?: number; $pl?: number; $end?: boolean; $top?: boolean }>`
  display: flex;
  gap: ${(p) => p.$gap ?? 0}px;
  margin-top: ${(p) => p.$mt ?? 0}px;
  padding-left: ${(p) => p.$pl ?? 0}px;
  ${(p) => p.$end && "justify-content: flex-end;"}
  ${(p) => p.$top && "align-items: flex-start;"}
`;

const Stack = styled.div<{ $gap?: number }>`
  display: flex;
  flex-direction: column;
  gap: ${(p) => p.$gap ?? 0}px;
  min-width: 0;
`;

const RadioLabel = styled.label<{ $mt?: number; $off?: boolean }>`
  display: flex;
  align-items: center;
  gap: 4px;
  height: 19px;
  margin-top: ${(p) => p.$mt ?? 0}px;
  white-space: nowrap;
  color: ${(p) => (p.$off ? "#7d7d7d" : "#000")};
`;

const RadioDot = styled.input`
  appearance: none;
  width: 12px;
  height: 12px;
  flex: none;
  border: 1px solid #8a8c8e;
  border-radius: 50%;
  background: radial-gradient(circle at 60% 60%, #eceeef 25%, #bfc3c6 60%, #f4f4f4 62%);
  &:checked { background: radial-gradient(circle at 50% 50%, #6cc4ea 10%, #0d3c66 42%, #f4f4f4 52%); }
  &:disabled { border-color: #bfc1c3; background: radial-gradient(#f0f0f0 40%, #dcdcdc 60%, #f6f6f6 62%); }
`;

const Radio = ({ name, label, mt, on, off }: { name: string; label: string; mt?: number; on?: boolean; off?: boolean }) => (
  <RadioLabel $mt={mt} $off={off}>
    <RadioDot type="radio" name={name} defaultChecked={on} disabled={off} />
    {label}
  </RadioLabel>
);

const TextField = styled.input`
  width: 100%;
  height: 20px;
  padding: 0 2px;
  border: 1px solid #dfe4ea;
  border-top-color: #abadb3;
  border-radius: 1px;
  background: #fff;
  &:read-only { background: #f0f0f0; color: #400020; }
`;

const SmallButton = styled.button<{ $pressed?: boolean; $focus?: boolean }>`
  flex: none;
  width: 25px;
  height: 21px;
  padding: 0;
  display: flex;
  align-items: center;
  justify-content: center;
  border: 1px solid #77797b;
  border-radius: 3px;
  background: linear-gradient(#f3f3f3, #ebebeb 50%, #dcdcdc 52%, #d0d0d0);
  box-shadow: inset 0 0 0 1px #fafafa;
  &:disabled { border-color: #b4b6b8; background: #f3f3f3; }
  ${(p) => p.$focus && "outline: 1px dotted #000; outline-offset: -3px;"}
  ${(p) =>
    p.$pressed &&
    css`
      border-color: #2c628b;
      background: linear-gradient(#e0f0fa, #c0e0f3 50%, #98cfec 52%, #6fb4da);
      box-shadow: inset 0 0 0 1px #9fc6de;
    `}
`;

const Small = ({ i, off, pressed, focus }: { i: string; off?: boolean; pressed?: boolean; focus?: boolean }) => (
  <SmallButton type="button" disabled={off} $pressed={pressed} $focus={focus} aria-label={i}>
    <Svg>{off ? <g opacity=".6">{ICONS[i]}</g> : ICONS[i]}</Svg>
  </SmallButton>
);

const Combo = styled.select<{ $w: number }>`
  width: ${(p) => p.$w}px;
  height: 21px;
  padding: 0 16px 0 3px;
  appearance: none;
  border: 1px solid #77797b;
  border-radius: 2px;
  background:
    linear-gradient(#000, #000) right 4px top 8px / 7px 1px no-repeat,
    linear-gradient(#000, #000) right 5px top 9px / 5px 1px no-repeat,
    linear-gradient(#000, #000) right 6px top 10px / 3px 1px no-repeat,
    linear-gradient(#000, #000) right 7px top 11px / 1px 1px no-repeat,
    linear-gradient(#f3f3f3, #ebebeb 50%, #dcdcdc 52%, #d2d2d2);
  &:disabled {
    opacity: 1;
    color: #76797c;
    border-color: #adb0b3;
    background:
      linear-gradient(#8c8f92, #8c8f92) right 4px top 8px / 7px 1px no-repeat,
      linear-gradient(#8c8f92, #8c8f92) right 5px top 9px / 5px 1px no-repeat,
      linear-gradient(#8c8f92, #8c8f92) right 6px top 10px / 3px 1px no-repeat,
      linear-gradient(#8c8f92, #8c8f92) right 7px top 11px / 1px 1px no-repeat,
      #f1f2f3;
  }
`;

const Divider = styled.hr`
  width: 100%;
  height: 2px;
  margin: 3px 0 4px;
  border: 0;
  border-top: 1px solid #a0a0a0;
  border-bottom: 1px solid #fff;
`;

const Footer = styled.footer<{ $pb?: number }>`
  display: flex;
  align-items: center;
  gap: 10px;
  margin-top: 9px;
  padding: 10px 1px ${(p) => p.$pb ?? 0}px;
  border-top: 1px solid #a0a0a0;
  box-shadow: inset 0 1px 0 #fff;
`;

const SpinField = styled.span`
  display: flex;
  width: 83px;
  height: 20px;
  border: 1px solid #8ba4bd;
  background: #f0f0f0;
`;
const SpinInput = styled.input`
  flex: 1;
  min-width: 0;
  border: 0;
  padding: 0 2px;
  background: none;
`;
const SpinPair = styled.span`
  display: flex;
  flex-direction: column;
  width: 12px;
`;
const SpinKey = styled.button<{ $dir: "up" | "down" | "right" }>`
  flex: 1;
  min-width: 11px;
  padding: 0;
  display: flex;
  align-items: center;
  justify-content: center;
  border: 1px solid #b8bbbe;
  background: #f1f1f1;
  &::before {
    content: "";
    border: 3px solid transparent;
    ${(p) => p.$dir === "up" && "border-bottom-color: #8a8a8a; border-top: 0;"}
    ${(p) => p.$dir === "down" && "border-top-color: #8a8a8a; border-bottom: 0;"}
    ${(p) => p.$dir === "right" && "border-left-color: #8a8a8a; border-right: 0;"}
  }
`;
const SpinRow = styled.label<{ $mt?: number }>`
  display: flex;
  align-items: center;
  height: 20px;
  margin-top: ${(p) => p.$mt ?? 0}px;
  color: #6d6d6d;
`;
const SpinName = styled.span`
  width: 31px;
  padding-top: 4px;
  small { font-size: 9px; }
`;
const SpinUnit = styled.span`
  padding-left: 6px;
`;
const SpinSide = styled.span`
  display: flex;
  width: 11px;
`;

const Spin = ({ label, mt }: { label: React.ReactNode; mt?: number }) => (
  <SpinRow $mt={mt}>
    <SpinName>{label}</SpinName>
    <SpinField>
      <SpinInput disabled />
      <SpinPair>
        <SpinKey type="button" disabled $dir="up" aria-label="Plus" />
        <SpinKey type="button" disabled $dir="down" aria-label="Moins" />
      </SpinPair>
      <SpinSide>
        <SpinKey type="button" disabled $dir="right" aria-label="Choisir" />
      </SpinSide>
    </SpinField>
    <SpinUnit>[kN]</SpinUnit>
  </SpinRow>
);

const DirRow = styled.div`
  display: grid;
  grid-template-columns: 55px 1fr;
  padding-left: 1px;
  line-height: 19px;
`;

const Picture = styled.div`
  flex: 1;
  min-width: 0;
  overflow: hidden;
  border: 1px solid #a0a0a0;
  border-right-color: #fff;
  border-bottom-color: #fff;
  background: linear-gradient(50deg, #fff 45%, #fffdf0 70%, #fdf4d8 95%);
`;

/* ---------- first dialog ---------- */

const loads: [number, number, number, number, string][] = [
  [1036, 188, 1041, 194, "1"],
  [1089, 197, 1096, 202, "2"],
  [1129, 174, 1137, 178, "3"],
  [1165, 179, 1174, 189, "4"],
  [1251, 163, 1257, 169, "5"],
];
const dims: [number, number, number, string][] = [
  [1089, 275, 296, "2"],
  [1129, 294, 315, "3"],
  [1165, 314, 335, "4"],
  [1251, 333, 354, "5"],
];

const LoadSketch = () => (
  <svg width="276" height="270" viewBox="1005 117 276 270" aria-label="Schéma de charge" fontFamily="Liberation Sans">
    <g fontSize="11" fill="#000">
      <text x="1006" y="129">Type de charge « Force »</text>
      <text x="1006" y="143">Distribution de charge « Concentrée définie par l'utilisate</text>
    </g>
    <g fill="#009fe3" stroke="none">
      {loads.map(([x, y, tx, ty, n]) => (
        <g key={n}>
          <path d={`M${x - 1} ${y}h2V220h-2z`} />
          <path d={`M${x - 10} 219h20l-10 20z`} />
          <text x={tx} y={ty} fontSize="13" fontWeight="700">P</text>
          <text x={tx + 9} y={ty + 3} fontSize="10" fontWeight="700">{n}</text>
        </g>
      ))}
    </g>
    <path d="M1036 254.500h215" stroke="#3c3c3c" strokeWidth="2.500" />
    <path d="M1089 252v5M1129.500 252v5M1165 252v5" stroke="#009fe3" strokeWidth="1.500" />
    <circle cx="1036" cy="254.500" r="2.500" fill="#e8171f" />
    <circle cx="1251" cy="254.500" r="2.500" fill="#e8171f" />
    <g fill="#e8171f" fontSize="13" fontWeight="700">
      <text x="1026" y="259">i</text>
      <text x="1256" y="259">j</text>
    </g>
    <g stroke="#4ab4e6" fill="none">
      <path d="M1036.500 275v82" strokeWidth="1.300" />
      {dims.map(([x, top, y, n]) => (
        <path key={n} d={`M1037 ${y - 0.5}H${x}M${x - 0.5} ${top}v23`} />
      ))}
    </g>
    <g fill="#1da0dd">
      {dims.map(([x, , y, n]) => (
        <g key={n}>
          <circle cx="1036.500" cy={y - 0.5} r="2" />
          <path d={`M${x - 6} ${y - 2.5}v4l6-2z`} />
          <text x={x + 5} y={y + 5} fontSize="12">X</text>
          <text x={x + 13} y={y + 7} fontSize="10">{n}</text>
        </g>
      ))}
    </g>
  </svg>
);

const LoadDialog = () => (
  <Window title="Modifier la charge sur les ensembles de barres" x={485} y={3} w={808}>
    <Row $gap={7}>
      <Stack $gap={10}>
        <Row $gap={8}>
          <Box title="N°" w={82} h={81}>
            <TextField aria-label="N°" defaultValue="1" readOnly />
          </Box>
          <Box title="Référence à" w={142}>
            <Radio name="ref" label="Barres" />
            <Radio name="ref" label="Liste de barres" />
            <Radio name="ref" label="Ensembles de barres" mt={1} on />
          </Box>
          <Box title="Sur les ensembles de barres n°" w={255}>
            <TextField aria-label="Sur les ensembles de barres n°" defaultValue="1" />
            <Row $gap={5} $mt={2} $end>
              <Small i="pick" off />
              <Small i="picklist" />
              <Small i="undo" off />
            </Row>
          </Box>
        </Row>
        <Row $gap={7} $top>
          <Box title="Type de charge" w={165} h={286}>
            <Radio name="type" label="Force" on />
            <Radio name="type" label="Moment" mt={2} />
            <Radio name="type" label="Température" mt={7} />
            <Radio name="type" label="Déformation axiale" mt={10} />
            <Radio name="type" label="Déplacement axial" mt={1} />
            <Radio name="type" label="Imperfection en arc" mt={10} />
            <Radio name="type" label="Précontrainte initiale" mt={10} />
            <Radio name="type" label="Spéciale :" mt={28} />
            <Row $gap={5} $mt={2} $pl={16}>
              <Combo $w={113} disabled aria-label="Spéciale">
                <option>Déplacement</option>
              </Combo>
              <Small i="handwin" off />
            </Row>
          </Box>
          <Box title="Distribution de charge" w={128} h={286}>
            <Radio name="dist" label="Concentrée :" on />
            <Row $gap={5} $mt={1} $pl={16}>
              <Combo $w={75} aria-label="Concentrée">
                <option>Défini par l'</option>
              </Combo>
              <Small i="handwin" />
            </Row>
            <Radio name="dist" label="Uniforme" mt={14} />
            <Radio name="dist" label="Trapézoïdale" mt={10} />
            <Radio name="dist" label="À section variable" mt={1} />
            <Radio name="dist" label="Parabolique" />
          </Box>
          <Box title="Direction de charge" w={188} h={158}>
            <DirRow>
              <span>Locale :</span>
              <Stack $gap={1}>
                <Radio name="dir" label="x" />
                <Radio name="dir" label="y" off />
                <Radio name="dir" label="z" />
              </Stack>
            </DirRow>
            <Divider />
            <DirRow>
              <span>Globale :</span>
              <Stack $gap={1}>
                <Radio name="dir" label="X" />
                <Radio name="dir" label="Y" off />
                <Radio name="dir" label="Z" on />
              </Stack>
            </DirRow>
          </Box>
        </Row>
        <Box title="Paramètres de charge" h={133}>
          <Spin label="P:" />
          <Spin label={<>p<small>2</small>:</>} mt={4} />
          <Spin label="P:" mt={13} />
          <Spin label={<>p<small>2</small>:</>} mt={4} />
        </Box>
        <Box title="Commentaire" h={45}>
          <TextField aria-label="Commentaire" />
        </Box>
      </Stack>
      <Picture>
        <LoadSketch />
      </Picture>
    </Row>
    <Footer $pb={2}>
      <Small i="help" />
      <Small i="edit" />
      <Small i="units" />
      <Small i="bolt" />
    </Footer>
  </Window>
);

/* ---------- second dialog ---------- */

const xs = [0.2, 1, 1.8, 2.6, 3.4, 4.2, 5, 5.8, 6.6, 7.4, 8.2, 9, 9.8, 10];

const Panel = styled.div<{ $w?: number }>`
  display: flex;
  flex-direction: column;
  ${(p) => (p.$w ? `width: ${p.$w}px; flex: none;` : "flex: 1; min-width: 0;")}
`;

const PanelBody = styled.div`
  flex: 1;
  display: flex;
  flex-direction: column;
  border-right: 1px solid #a9a9ee;
  border-bottom: 1px solid #a9a9ee;
  background: #f0f4fa;
`;

const Grid = styled.table`
  width: 100%;
  table-layout: fixed;
  border-collapse: collapse;
  background: #fff;
  th, td {
    height: 16px;
    padding: 0 3px 0 0;
    border: 1px solid #a0a0a0;
    border-right-width: 0;
    line-height: 15px;
    font-weight: 400;
    text-align: right;
  }
  th { height: 17px; padding: 0; text-align: center; background: #f0f0f0; }
`;

const GridRow = styled.tr<{ $shade?: boolean }>`
  background: ${(p) => (p.$shade ? "#ebebeb" : "#fff")};
`;

const FocusCell = styled.td`
  outline: 1px dotted #000;
  outline-offset: -2px;
`;

const EmptyArea = styled.div`
  display: grid;
  grid-template-columns: repeat(3, 1fr);
  height: 98px;
  background: #e8eeee;
  border-bottom: 1px solid #fff;
  span { border-left: 1px solid #a0a0a0; }
`;

const PanelTools = styled.div<{ $end?: boolean }>`
  display: flex;
  gap: 5px;
  height: 30px;
  padding: 5px 3px 0 4px;
  ${(p) => p.$end && "justify-content: flex-end;"}
`;

const Gap = styled.span<{ $w?: number }>`
  ${(p) => (p.$w ? `width: ${p.$w}px;` : "flex: 1;")}
`;

const ChartArea = styled.div`
  height: 371px;
  overflow: hidden;
  border-top: 1px solid #a0a0a0;
  border-left: 1px solid #a0a0a0;
  background: linear-gradient(45deg, #fff 20%, #fffff0 50%, #ffffdc 95%);
`;

const PushButton = styled.button<{ $primary?: boolean }>`
  width: 73px;
  height: 21px;
  padding: 0;
  border: 1px solid #77797b;
  border-radius: 3px;
  background: linear-gradient(#f3f3f3, #ebebeb 50%, #dcdcdc 52%, #cfcfcf);
  box-shadow: inset 0 0 0 1px #fafafa;
  ${(p) =>
    p.$primary &&
    css`
      border-color: #2f7fae;
      background: linear-gradient(#eef4f7, #e1edf2 50%, #cfe2ec 52%, #c3dae6);
      box-shadow: inset 0 0 0 1px #3fd0fa;
    `}
`;

const cx = (v: number) => 1031.5 + v * 33.3;
const cy = (v: number) => 673.5 - v * 85.5;

const Chart = () => (
  <svg width="464" height="370" viewBox="948 410 464 370" aria-label="Diagramme des charges" fontFamily="Liberation Sans" fontSize="9">
    <g stroke="#c3c3b4" strokeWidth="1">
      {Array.from({ length: 9 }, (_, i) => (
        <path key={i} d={`M1017 ${Math.round(cy(i / 4)) + 0.5}H1365`} />
      ))}
      {Array.from({ length: 11 }, (_, i) => (
        <path key={i} d={`M${Math.round(cx(i)) - 0.5} 502V705`} />
      ))}
    </g>
    <path d="M1017.500 502V674" stroke="#000" />
    <g stroke="#000">
      {Array.from({ length: 81 }, (_, i) => (
        <path key={i} d={`M${i % 10 === 0 ? 1009 : i % 5 === 0 ? 1012 : 1014} ${cy(i / 40)}h${i % 10 === 0 ? 8 : i % 5 === 0 ? 5 : 3}`} />
      ))}
    </g>
    <path d="M1031 705.500h334" stroke="#000" />
    <g stroke="#000">
      {Array.from({ length: 101 }, (_, i) => (
        <path key={i} d={`M${cx(i / 10)} 706v${i % 10 === 0 ? 7 : i % 5 === 0 ? 5 : 3}`} />
      ))}
    </g>
    <text x="985" y="489" fontSize="11">[kN]</text>
    <text x="1384" y="722" fontSize="11">[m]</text>
    {Array.from({ length: 9 }, (_, i) => (
      <text key={i} x="1006" y={Math.round(cy(i / 4)) + 2} textAnchor="end">{(i / 4).toFixed(3)}</text>
    ))}
    {Array.from({ length: 11 }, (_, i) => (
      <text key={i} x={cx(i) - 1} y="722" textAnchor="middle">{i.toFixed(3)}</text>
    ))}
    {xs.slice(0, 13).map((v) => {
      const x = Math.round(cx(v));
      return (
        <g key={v} fill="#00008c">
          <rect x={x - 1} y="502" width="2" height="168" />
          <rect x={x - 2} y="501" width="3" height="3" />
          <path d={`M${x - 4} 667.500h7l-3 5.500z`} />
        </g>
      );
    })}
    <path d="M1031 673.500h333" stroke="#000" strokeWidth="3" />
    <g fill="#f00">
      <rect x="1028" y="670" width="6" height="6" />
      <rect x="1361" y="670" width="6" height="6" />
      {xs.map((v) => (
        <rect key={v} x={cx(v) - 1.5} y="703" width="3" height="3" />
      ))}
    </g>
    {xs.filter((v) => v !== 9.8).map((v) => (
      <React.Fragment key={v}>
        <text transform={`translate(${cx(v) + 2.5} 473) rotate(-90)`}>{v === 10 ? "0.000" : "2.000"}</text>
        <text textAnchor="end" transform={`translate(${cx(v) + 2.5} 732) rotate(-90)`}>{v.toFixed(3)}</text>
      </React.Fragment>
    ))}
  </svg>
);

const ConcentratedDialog = () => (
  <Window title="Modifier la charge concentrée définie par l'utilisateur" x={672} y={296} w={752} active>
    <Row $gap={8}>
      <Panel $w={250}>
        <GroupHead>Charge</GroupHead>
        <PanelBody>
          <Grid>
            <thead>
              <tr>
                <th>x [m]</th>
                <th>Δx [m]</th>
                <th>P [kN]</th>
              </tr>
            </thead>
            <tbody>
              {xs.map((v, i) => (
                <GridRow key={v} $shade={i === 11}>
                  {i === 0 ? <FocusCell>{v.toFixed(3)}</FocusCell> : <td>{v.toFixed(3)}</td>}
                  <td>{(i === 0 || i === 13 ? 0.2 : 0.8).toFixed(3)}</td>
                  <td>{(i === 13 ? 0 : 2).toFixed(3)}</td>
                </GridRow>
              ))}
              <GridRow>
                <td />
                <td />
                <td />
              </GridRow>
            </tbody>
          </Grid>
          <EmptyArea>
            <span />
            <span />
            <span />
          </EmptyArea>
          <PanelTools>
            <Small i="xlUp" focus />
            <Small i="xlDown" />
            <Gap $w={1} />
            <Small i="rowIn" />
            <Small i="rowOut" />
            <Gap $w={1} />
            <Small i="del" />
          </PanelTools>
        </PanelBody>
      </Panel>
      <Panel>
        <PanelBody>
          <ChartArea>
            <Chart />
          </ChartArea>
          <PanelTools $end>
            <Small i="nums" pressed />
          </PanelTools>
        </PanelBody>
      </Panel>
    </Row>
    <Footer>
      <Small i="help" />
      <Row $gap={5}>
        <Small i="open" />
        <Small i="save" />
      </Row>
      <Small i="calc" />
      <Gap />
      <PushButton type="button" $primary>OK</PushButton>
      <PushButton type="button">Annuler</PushButton>
    </Footer>
  </Window>
);

/* ---------- red callouts over the windows ---------- */

const Callouts = () => (
  <Layer aria-hidden="true">
    <defs>
      <filter id="shade" x="-10%" y="-10%" width="130%" height="130%">
        <feDropShadow dx="4" dy="4" stdDeviation="2" floodColor="#000" floodOpacity=".4" />
      </filter>
    </defs>
    <g transform="translate(-3 -76)" filter="url(#shade)">
      <rect x="674" y="224" width="128" height="52" fill="none" stroke="#c00000" strokeWidth="2" />
      <path d="M812 261l276 119M713 735L335 374" stroke="#c00000" strokeWidth="3" />
      <path d="M1101 385.500l-17.500.500 7-13.500zM323.500 364l16 4-11.500 11.500z" fill="#c00000" />
    </g>
  </Layer>
);

export default function App() {
  return (
    <Page>
      <GlobalStyle />
      <Toolbars />
      <Desktop>
        <Model />
        <LoadDialog />
        <ConcentratedDialog />
        <Callouts />
      </Desktop>
    </Page>
  );
}
